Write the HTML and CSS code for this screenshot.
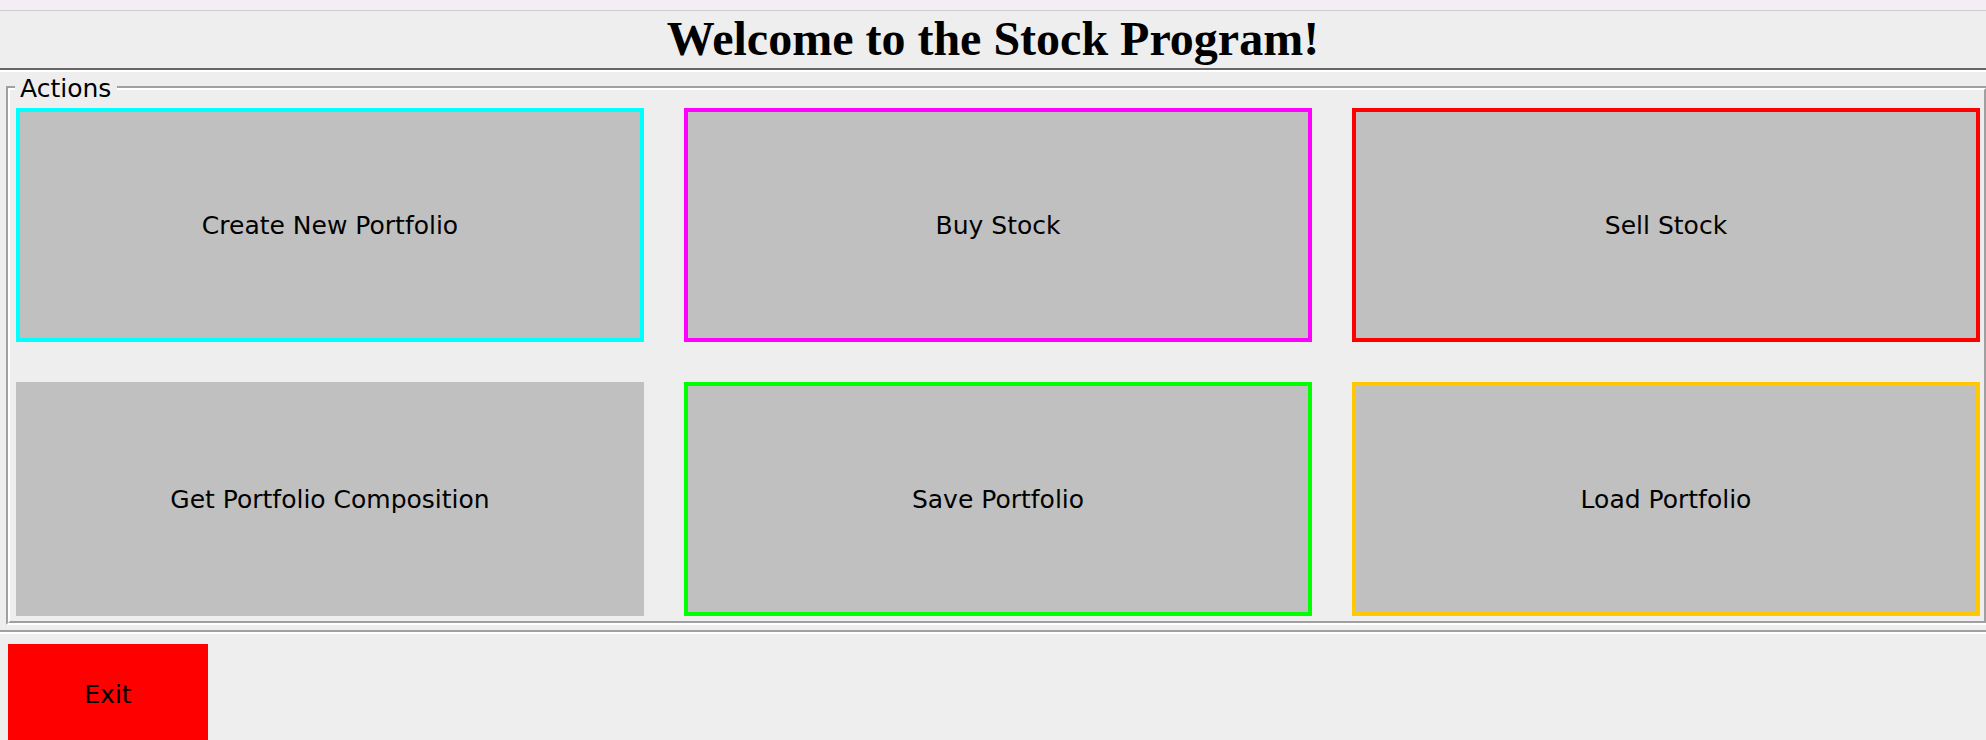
FILE: index.html
```html
<!DOCTYPE html>
<html>
<head>
<meta charset="utf-8">
<title>Stock Program</title>
<link rel="stylesheet" href="styles.css">
</head>
<body>
<div class="topbar"></div>
<h1 class="title">Welcome to the Stock Program!</h1>
<div class="title-rule"></div>
<div class="panel">
  <div class="panel-inner">
    <span class="legend">Actions</span>
    <div class="grid">
      <button class="btn btn-cyan">Create New Portfolio</button>
      <button class="btn btn-magenta">Buy Stock</button>
      <button class="btn btn-red">Sell Stock</button>
      <button class="btn btn-plain">Get Portfolio Composition</button>
      <button class="btn btn-green">Save Portfolio</button>
      <button class="btn btn-orange">Load Portfolio</button>
    </div>
  </div>
</div>
<div class="separator"></div>
<div class="footer">
  <button class="exit">Exit</button>
</div>
</body>
</html>
```

FILE: styles.css
```css
html, body {
  margin: 0;
  padding: 0;
  height: 740px;
  overflow: hidden;
  background: #eeeeee;
  font-family: "DejaVu Sans", "Liberation Sans", sans-serif;
  color: #000;
}

.topbar {
  height: 10px;
  background: #f4eef4;
  border-bottom: 1px solid #cfccd1;
}

.title {
  margin: 0;
  height: 55px;
  padding-bottom: 2px;
  line-height: 55px;
  text-align: center;
  font-family: "Liberation Serif", "Times New Roman", serif;
  font-weight: bold;
  font-size: 48px;
  color: #000;
}

.title-rule {
  border-top: 2px solid #666666;
  border-bottom: 2px solid #ffffff;
}

.panel {
  position: relative;
  margin: 14px -2px 0 6px;
  border-top: 2px solid #a0a0a0;
  border-left: 2px solid #a0a0a0;
  border-right: 2px solid #ffffff;
  border-bottom: 2px solid #ffffff;
}

.panel-inner {
  border-top: 2px solid #ffffff;
  border-left: 2px solid #ffffff;
  border-right: 2px solid #a0a0a0;
  border-bottom: 2px solid #a0a0a0;
  padding: 18px 0 5px 6px;
}

.legend {
  position: absolute;
  top: -14px;
  left: 7px;
  padding: 0 6px 0 5px;
  background: #eeeeee;
  font-size: 25px;
  line-height: 29px;
}

.grid {
  display: grid;
  grid-template-columns: repeat(3, 628px);
  grid-template-rows: repeat(2, 234px);
  gap: 40px;
}

.btn {
  box-sizing: border-box;
  margin: 0;
  padding: 0;
  background: #c0c0c0;
  border: 4px solid #c0c0c0;
  font-family: "DejaVu Sans", "Liberation Sans", sans-serif;
  font-size: 25px;
  color: #000;
  text-align: center;
}

.btn-cyan { border-color: #00ffff; }
.btn-magenta { border-color: #ff00ff; }
.btn-red { border-color: #ff0000; }
.btn-plain { border-color: #c0c0c0; }
.btn-green { border-color: #00ff00; }
.btn-orange { border-color: #ffc800; }

.separator {
  margin-top: 5px;
  border-top: 2px solid #a0a0a0;
  border-bottom: 2px solid #ffffff;
}

.footer {
  padding: 10px 0 0 8px;
}

.exit {
  display: block;
  width: 200px;
  height: 100px;
  margin: 0;
  padding: 0;
  border: none;
  background: #ff0000;
  font-family: "DejaVu Sans", "Liberation Sans", sans-serif;
  font-size: 25px;
  color: #000;
}
```
